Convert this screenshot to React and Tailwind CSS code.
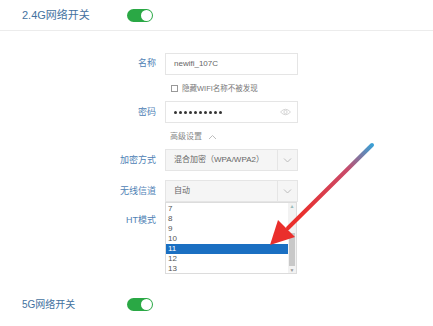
import React from 'react';

const font = { fontFamily: '"Liberation Sans", "Noto Sans CJK SC", sans-serif' };

function Toggle() {
  return (
    <div className="w-[26px] h-[13px] rounded-full bg-[#2aa845] flex items-center justify-end pr-[1px]">
      <div className="w-[11px] h-[11px] rounded-full bg-white" />
    </div>
  );
}

function Row({ label, children, className = '' }) {
  return (
    <div className={`flex items-center ${className}`}>
      <div className="w-[157px] pr-[1px] text-right text-[9px] text-[#4f82b5]">{label}</div>
      <div className="ml-[8px] w-[133px]">{children}</div>
    </div>
  );
}

function Chevron({ up }) {
  return (
    <svg width="9" height="6" viewBox="0 0 9 6" fill="none" stroke="#bdbdbd" strokeWidth="1">
      {up ? <path d="M1 5 L4.5 1.5 L8 5" /> : <path d="M1 1.5 L4.5 5 L8 1.5" />}
    </svg>
  );
}

function Select({ value }) {
  return (
    <div className="h-[22px] border border-[#e5e5e5] bg-[#f5f5f5] flex items-center">
      <div className="flex-1 pl-[8px] text-[8px] text-[#666]">{value}</div>
      <div className="w-[20px] h-full border-l border-[#e5e5e5] flex items-center justify-center">
        <Chevron />
      </div>
    </div>
  );
}

export default function App() {
  const channels = ['7', '8', '9', '10', '11', '12', '13'];
  return (
    <div className="w-[433px] h-[326px] bg-white relative overflow-hidden" style={font}>
      <div className="h-[31px] border-b border-[#ececec] flex items-center pl-[22px]">
        <div className="w-[105px] text-[11px] text-[#44729f]">2.4G网络开关</div>
        <Toggle />
      </div>

      <div className="pt-[22px]">
        <Row label="名称">
          <div className="h-[22px] border border-[#e5e5e5] flex items-center pl-[8px] text-[8px] text-[#666]">newifi_107C</div>
        </Row>
        <div className="ml-[171px] mt-[8px] flex items-center gap-[4px] text-[7.5px] text-[#777]">
          <div className="w-[7px] h-[7px] border border-[#999]" />
          <span>隐藏WIFI名称不被发现</span>
        </div>
        <Row label="密码" className="mt-[7px]">
          <div className="h-[22px] border border-[#e5e5e5] flex items-center pl-[8px] pr-[6px]">
            <div className="flex-1 flex items-center gap-[2px]">
              {Array.from({ length: 10 }).map((_, i) => (
                <div key={i} className="w-[3px] h-[3px] rounded-full bg-[#333]" />
              ))}
            </div>
            <svg width="11" height="8" viewBox="0 0 11 8" fill="none" stroke="#d6d6d6" strokeWidth="1">
              <path d="M0.5 4 Q5.5 -1.5 10.5 4 Q5.5 9.5 0.5 4 Z" />
              <circle cx="5.5" cy="4" r="1.6" />
            </svg>
          </div>
        </Row>
        <div className="ml-[170px] mt-[7px] h-[14px] flex items-center gap-[6px] text-[8px] text-[#888]">
          <span>高级设置</span>
          <Chevron up />
        </div>
        <Row label="加密方式" className="mt-[5px]">
          <Select value="混合加密（WPA/WPA2）" />
        </Row>
        <Row label="无线信道" className="mt-[9px]">
          <Select value="自动" />
        </Row>
        <Row label="HT模式" className="mt-[8px]">
          <div className="h-[20px]" />
        </Row>
      </div>

      <div className="absolute left-[0px] top-[292px] w-full h-[24px] flex items-center pl-[22px]">
        <div className="w-[105px] text-[10px] text-[#44729f]">5G网络开关</div>
        <Toggle />
      </div>

      <div className="absolute left-[165px] top-[202px] w-[132px] h-[72px] bg-white border border-[#dcdcdc] flex">
        <div className="flex-1 pt-[1px]">
          {channels.map((c) => (
            <div
              key={c}
              className={`h-[10px] leading-[10px] pl-[2px] text-[8px] ${c === '11' ? 'bg-[#1a6fc2] text-white' : 'text-[#555]'}`}
            >
              {c}
            </div>
          ))}
        </div>
        <div className="w-[8px] bg-[#f2f2f2] flex flex-col items-center">
          <div className="text-[5px] leading-[6px] text-[#9bb]">▲</div>
          <div className="mt-[24px] w-[6px] h-[33px] bg-[#c8c8c8]" />
          <div className="mt-auto text-[5px] leading-[6px] text-[#999]">▼</div>
        </div>
      </div>

      <svg className="absolute left-0 top-0" width="433" height="326" viewBox="0 0 433 326">
        <defs>
          <linearGradient id="ag" x1="372" y1="145" x2="300" y2="215" gradientUnits="userSpaceOnUse">
            <stop offset="0" stopColor="#3a9fd4" />
            <stop offset="0.35" stopColor="#c94a6a" />
            <stop offset="1" stopColor="#ea2f2c" />
          </linearGradient>
        </defs>
        <line x1="372" y1="145" x2="288" y2="228" stroke="url(#ag)" strokeWidth="4" strokeLinecap="round" />
        <polygon points="270,245 278,220 295,237" fill="#ea2f2c" />
      </svg>
    </div>
  );
}
